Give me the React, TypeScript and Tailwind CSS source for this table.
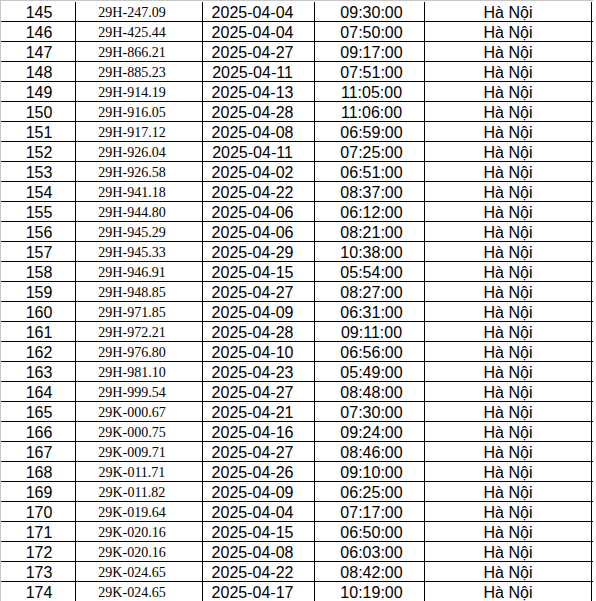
const rows: [number, string, string, string][] = [
  [145, '29H-247.09', '2025-04-04', '09:30:00'],
  [146, '29H-425.44', '2025-04-04', '07:50:00'],
  [147, '29H-866.21', '2025-04-27', '09:17:00'],
  [148, '29H-885.23', '2025-04-11', '07:51:00'],
  [149, '29H-914.19', '2025-04-13', '11:05:00'],
  [150, '29H-916.05', '2025-04-28', '11:06:00'],
  [151, '29H-917.12', '2025-04-08', '06:59:00'],
  [152, '29H-926.04', '2025-04-11', '07:25:00'],
  [153, '29H-926.58', '2025-04-02', '06:51:00'],
  [154, '29H-941.18', '2025-04-22', '08:37:00'],
  [155, '29H-944.80', '2025-04-06', '06:12:00'],
  [156, '29H-945.29', '2025-04-06', '08:21:00'],
  [157, '29H-945.33', '2025-04-29', '10:38:00'],
  [158, '29H-946.91', '2025-04-15', '05:54:00'],
  [159, '29H-948.85', '2025-04-27', '08:27:00'],
  [160, '29H-971.85', '2025-04-09', '06:31:00'],
  [161, '29H-972.21', '2025-04-28', '09:11:00'],
  [162, '29H-976.80', '2025-04-10', '06:56:00'],
  [163, '29H-981.10', '2025-04-23', '05:49:00'],
  [164, '29H-999.54', '2025-04-27', '08:48:00'],
  [165, '29K-000.67', '2025-04-21', '07:30:00'],
  [166, '29K-000.75', '2025-04-16', '09:24:00'],
  [167, '29K-009.71', '2025-04-27', '08:46:00'],
  [168, '29K-011.71', '2025-04-26', '09:10:00'],
  [169, '29K-011.82', '2025-04-09', '06:25:00'],
  [170, '29K-019.64', '2025-04-04', '07:17:00'],
  [171, '29K-020.16', '2025-04-15', '06:50:00'],
  [172, '29K-020.16', '2025-04-08', '06:03:00'],
  [173, '29K-024.65', '2025-04-22', '08:42:00'],
  [174, '29K-024.65', '2025-04-17', '10:19:00'],
];

const cell = 'h-full border-r border-black pt-px text-center leading-[20px] whitespace-nowrap';
const sans = "font-['Liberation_Sans',Arial,sans-serif] text-[16px] text-black";
const serif = "font-['Liberation_Serif','Times_New_Roman',serif] text-[14px] text-black";

export default function App() {
  return (
    <div className="h-[601px] w-[596px] overflow-hidden bg-white">
      <div className="w-[593px] border-t border-l border-[#c6c6c6] pt-px">
        {rows.map(([no, plate, date, time]) => (
          <div
            key={no}
            className="grid h-5 grid-cols-[75px_127px_112px_110px_167px] border-b border-black"
          >
            <div className={`${cell} ${sans} pl-[2px]`}>{no}</div>
            <div className={`${cell} ${serif} pr-[14px]`}>{plate}</div>
            <div className={`${cell} ${sans} pr-3`}>{date}</div>
            <div className={`${cell} ${sans} pl-1`}>{time}</div>
            <div className={`${cell} ${sans}`}>Hà Nội</div>
          </div>
        ))}
      </div>
    </div>
  );
}
